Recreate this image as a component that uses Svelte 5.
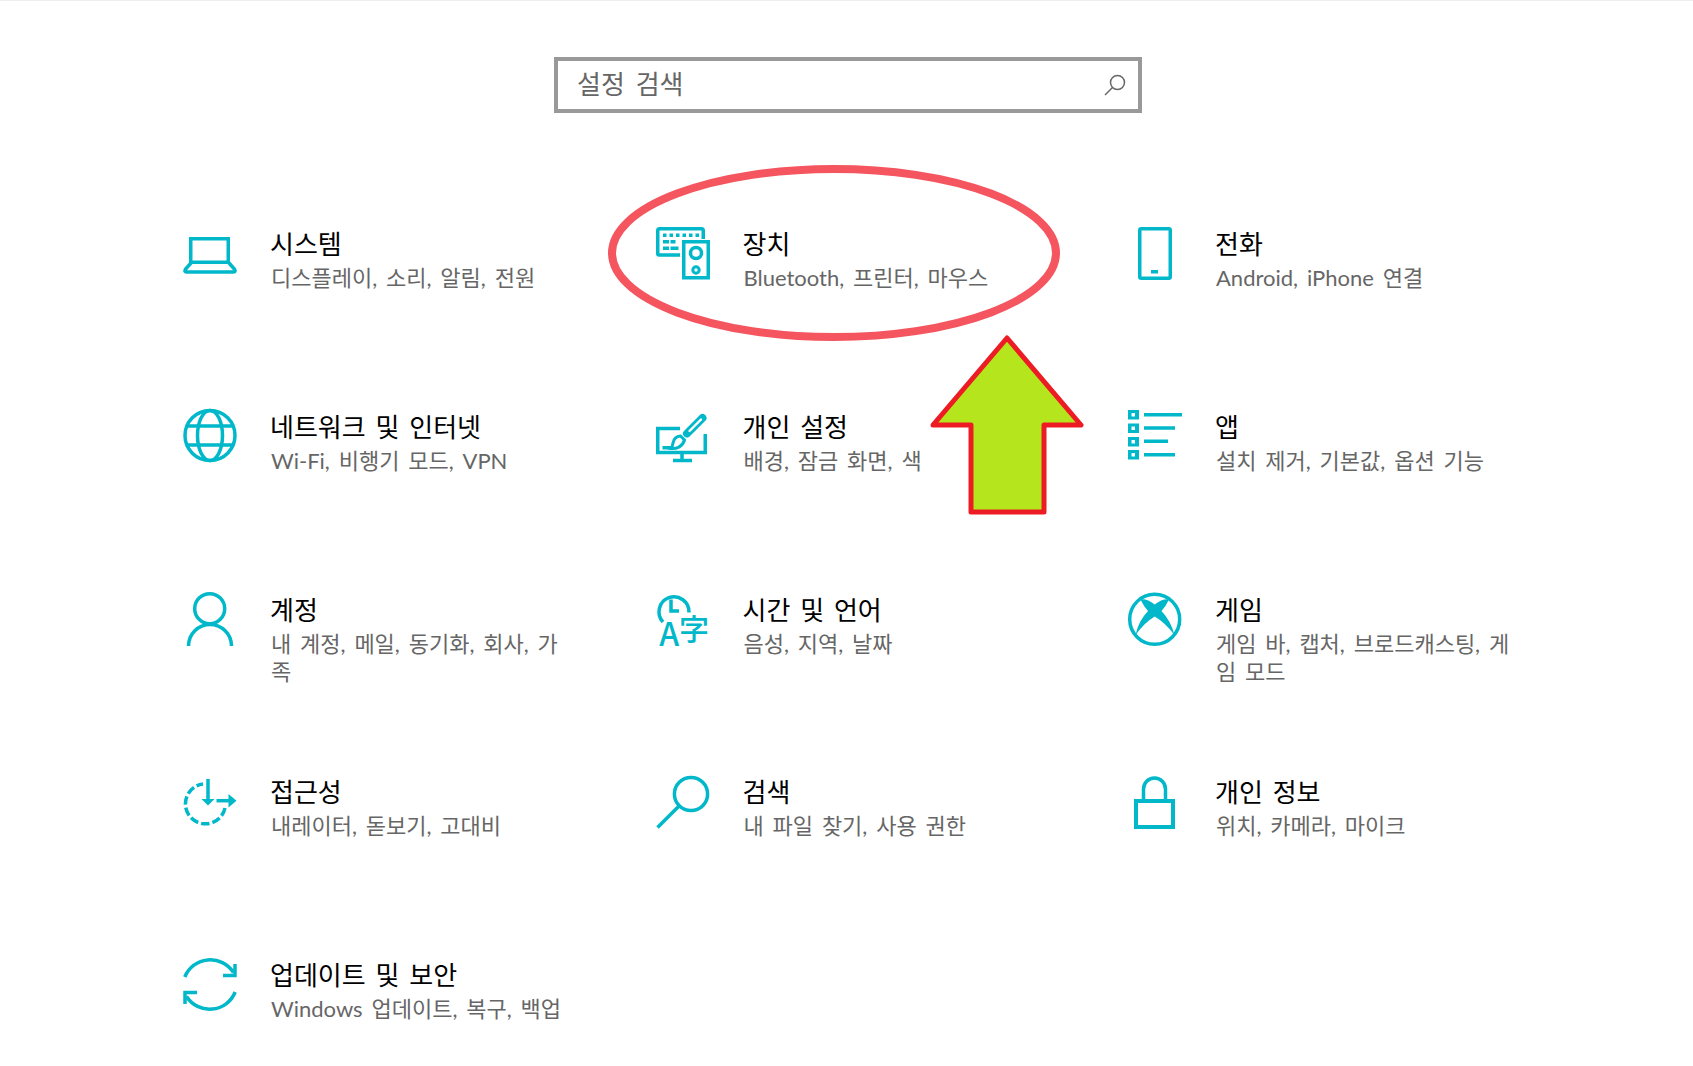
<script>
  const items = [
    { id: 'laptop', title: '시스템', sub: '디스플레이, 소리, 알림, 전원' },
    { id: 'devices', title: '장치', sub: 'Bluetooth, 프린터, 마우스' },
    { id: 'phone', title: '전화', sub: 'Android, iPhone 연결' },
    { id: 'globe', title: '네트워크 및 인터넷', sub: 'Wi-Fi, 비행기 모드, VPN' },
    { id: 'paint', title: '개인 설정', sub: '배경, 잠금 화면, 색' },
    { id: 'apps', title: '앱', sub: '설치 제거, 기본값, 옵션 기능' },
    { id: 'user', title: '계정', sub: '내 계정, 메일, 동기화, 회사, 가족' },
    { id: 'time', title: '시간 및 언어', sub: '음성, 지역, 날짜' },
    { id: 'xbox', title: '게임', sub: '게임 바, 캡처, 브로드캐스팅, 게임 모드' },
    { id: 'access', title: '접근성', sub: '내레이터, 돋보기, 고대비' },
    { id: 'search', title: '검색', sub: '내 파일 찾기, 사용 권한' },
    { id: 'lock', title: '개인 정보', sub: '위치, 카메라, 마이크' },
    { id: 'update', title: '업데이트 및 보안', sub: 'Windows 업데이트, 복구, 백업' }
  ];
</script>

<main class="page">
  <div class="search">
    <span class="placeholder">설정 검색</span>
    <svg class="search-icon" viewBox="0 0 24 24" width="24" height="24" aria-hidden="true">
      <circle cx="14.5" cy="9.5" r="7" />
      <path d="M9.5 14.5 L2 22" />
    </svg>
  </div>

  <div class="grid">
    {#each items as item}
      <section class="item">
        <svg class="icon" viewBox="0 0 54 54" width="54" height="54" aria-hidden="true">
          {#if item.id === 'laptop'}
            <rect x="7.75" y="11.75" width="37.5" height="23.5" />
            <path d="M8 36 L2.4 42.3 Q1 44.9 3.5 44.9 H50.5 Q53 44.9 51.6 42.3 L46 36" />
          {:else if item.id === 'devices'}
            <path d="M24 28 H3 Q1.75 28 1.75 26.5 V3.5 Q1.75 1.75 3.5 1.75 H45.5 Q47.25 1.75 47.25 3.5 V12" />
            <rect x="27.75" y="14.75" width="24.5" height="36" />
            <circle cx="40" cy="26" r="5.5" stroke-width="3.5" />
            <circle cx="40" cy="43" r="3.2" stroke-width="3" />
            <path class="fill" d="M7 6.5h3.5v3.5H7zM13.5 6.5h3.5v3.5h-3.5zM20 6.5h3.5v3.5H20zM26.5 6.5h3.5v3.5h-3.5zM33 6.5h3.5v3.5H33zM39.5 6.5h3.5v3.5h-3.5zM7 13h6v3.5H7zM14.5 13h5v3.5h-5zM7 19.5h6V23H7zM14.5 19.5h8V23h-8z" />
          {:else if item.id === 'phone'}
            <rect x="11.75" y="1.75" width="30.5" height="49.5" rx="1.5" />
            <path class="fill" d="M23 43h7v3.5h-7z" />
          {:else if item.id === 'globe'}
            <circle cx="27" cy="25.5" r="25" />
            <ellipse cx="27" cy="25.5" rx="12.5" ry="25" />
            <path d="M5 16 H49 M5 35 H49" />
          {:else if item.id === 'paint'}
            <path d="M24 18.5 H1.75 V42.5 H49.25 V24" />
            <path d="M26 44 V50.5 M17 50.5 H36" />
            <path d="M6.5 37.75 H17" />
            <path d="M31 23.5 L46.5 8" stroke-width="8" stroke-linecap="round" />
            <path d="M33.5 21 L45 9.5" stroke="#fff" stroke-width="2.4" stroke-linecap="round" />
            <path class="head" d="M24.5 26 C19 26.5 17.5 30 17 33 C16.5 36 15.5 38 15 38.5 C20 39 26.5 37 28.5 30 Z" stroke-width="3" />
          {:else if item.id === 'apps'}
            <path class="fill" fill-rule="evenodd" d="M0 0h11v9.5H0zM3.5 3v3.5H7V3zM0 13.5h11V23H0zM3.5 16.5V20H7v-3.5zM0 27h11v9.5H0zM3.5 30v3.5H7V30zM0 40h11v9.5H0zM3.5 43v3.5H7V43z" />
            <path d="M16 4.7 H54 M16 18 H47 M16 31.3 H40 M16 44.7 H47" />
          {:else if item.id === 'user'}
            <circle cx="26.7" cy="15.7" r="15" />
            <path d="M5.5 53 A21.5 21.5 0 0 1 48.5 53" />
          {:else if item.id === 'time'}
            <path d="M7 29 A15 15 0 1 1 33 19.5" />
            <path d="M15 6.5 V18 H23" />
            <text class="glyph" x="13.3" y="53" text-anchor="middle" font-size="32">A</text>
            <text class="glyph" x="38" y="47" text-anchor="middle" font-size="30">字</text>
          {:else if item.id === 'xbox'}
            <circle cx="26.7" cy="26.3" r="25" />
            <path class="fill" d="M12.5 6.5 Q19 5.5 26.7 11.5 Q34.5 5.5 41 6.5 Q38 13 33.5 18 Q43 28 46.5 42 Q37 29.5 26.7 23.5 Q16.5 29.5 7.5 42 Q10.5 28 20 18 Q15.5 13 12.5 6.5Z" />
          {:else if item.id === 'access'}
            <path d="M42 33 A20 20 0 1 1 20 9" stroke-dasharray="8.5 3" />
            <path d="M25 4 V28" />
            <path class="fill" d="M18.5 24 H31.5 L25 30.5Z M45.5 19 L53.5 25.7 L45.5 32.5Z" />
            <path d="M33.5 25.7 H47" />
          {:else if item.id === 'search'}
            <circle cx="35" cy="19" r="16.6" />
            <path d="M22.5 31.5 L1.5 52.5" />
          {:else if item.id === 'lock'}
            <rect x="8" y="26" width="37" height="26" stroke-width="4" />
            <path d="M15.5 24 V14 A11 11 0 0 1 37.5 14 V24" />
          {:else if item.id === 'update'}
            <path d="M1.8 19 A27.5 27.5 0 0 1 50.5 14.5" />
            <path d="M40 17.5 H52 V6" />
            <path d="M52.2 34 A27.5 27.5 0 0 1 3.5 38.5" />
            <path d="M14 34.5 H2 V46" />
          {/if}
        </svg>
        <div class="text">
          <h2>{item.title}</h2>
          <p>{item.sub}</p>
        </div>
      </section>
    {/each}
  </div>

  <svg class="annotations" viewBox="0 0 1693 1066" width="1693" height="1066" aria-hidden="true">
    <ellipse class="ring" cx="834" cy="253" rx="222" ry="84" />
    <polygon class="arrow" points="1007,338 1081,425 1044,425 1044,512 971,512 971,425 933,425" />
  </svg>
</main>

<style>
  :global(body) {
    margin: 0;
    background: #fff;
  }
  .page {
    position: relative;
    width: 1693px;
    height: 1066px;
    box-sizing: border-box;
    padding-top: 56px;
    border-top: 1px solid #efefef;
    overflow: hidden;
    font-family: "Noto Sans CJK KR", "Noto Sans", sans-serif;
  }
  .search {
    display: flex;
    align-items: center;
    justify-content: space-between;
    box-sizing: border-box;
    width: 588px;
    height: 56px;
    margin-left: 554px;
    padding: 0 11px 0 19px;
    border: 4px solid #999;
  }
  .placeholder {
    font-size: 26px;
    line-height: 1;
    color: #666;
    word-spacing: 5px;
    margin-top: -5px;
  }
  .search-icon {
    fill: none;
    stroke: #666;
    stroke-width: 1.5;
  }
  .grid {
    display: grid;
    grid-template-columns: repeat(3, 472.5px);
    grid-auto-rows: 182.75px;
    margin: 114px 0 0 183px;
  }
  .item {
    display: flex;
    gap: 33px;
    align-items: flex-start;
  }
  .icon {
    flex: none;
    overflow: visible;
    fill: none;
    stroke: #00b8c9;
    stroke-width: 3.5;
  }
  .icon .fill {
    fill: #00b8c9;
    stroke: none;
  }
  .icon .head {
    fill: #fff;
  }
  .glyph {
    fill: #00b8c9;
    stroke: none;
    font-weight: 500;
    font-family: "Noto Sans CJK KR", "Noto Sans", sans-serif;
  }
  .text {
    width: 297px;
    margin-top: -2px;
    word-break: break-all;
  }
  h2 {
    margin: 0 0 3px;
    font-size: 26px;
    font-weight: 400;
    line-height: 36px;
    color: #000;
    word-spacing: 4px;
  }
  p {
    margin: 0;
    padding-left: 1px;
    font-family: Lato, "Noto Sans CJK KR", sans-serif;
    font-size: 22px;
    font-weight: 400;
    line-height: 28px;
    color: #666;
    word-spacing: 3.2px;
  }
  .annotations {
    position: absolute;
    inset: -1px 0 0 0;
    pointer-events: none;
  }
  .ring {
    fill: none;
    stroke: #f4555f;
    stroke-width: 8;
  }
  .arrow {
    fill: #b5e61d;
    stroke: #ed1c24;
    stroke-width: 5;
    stroke-linejoin: round;
  }
</style>
